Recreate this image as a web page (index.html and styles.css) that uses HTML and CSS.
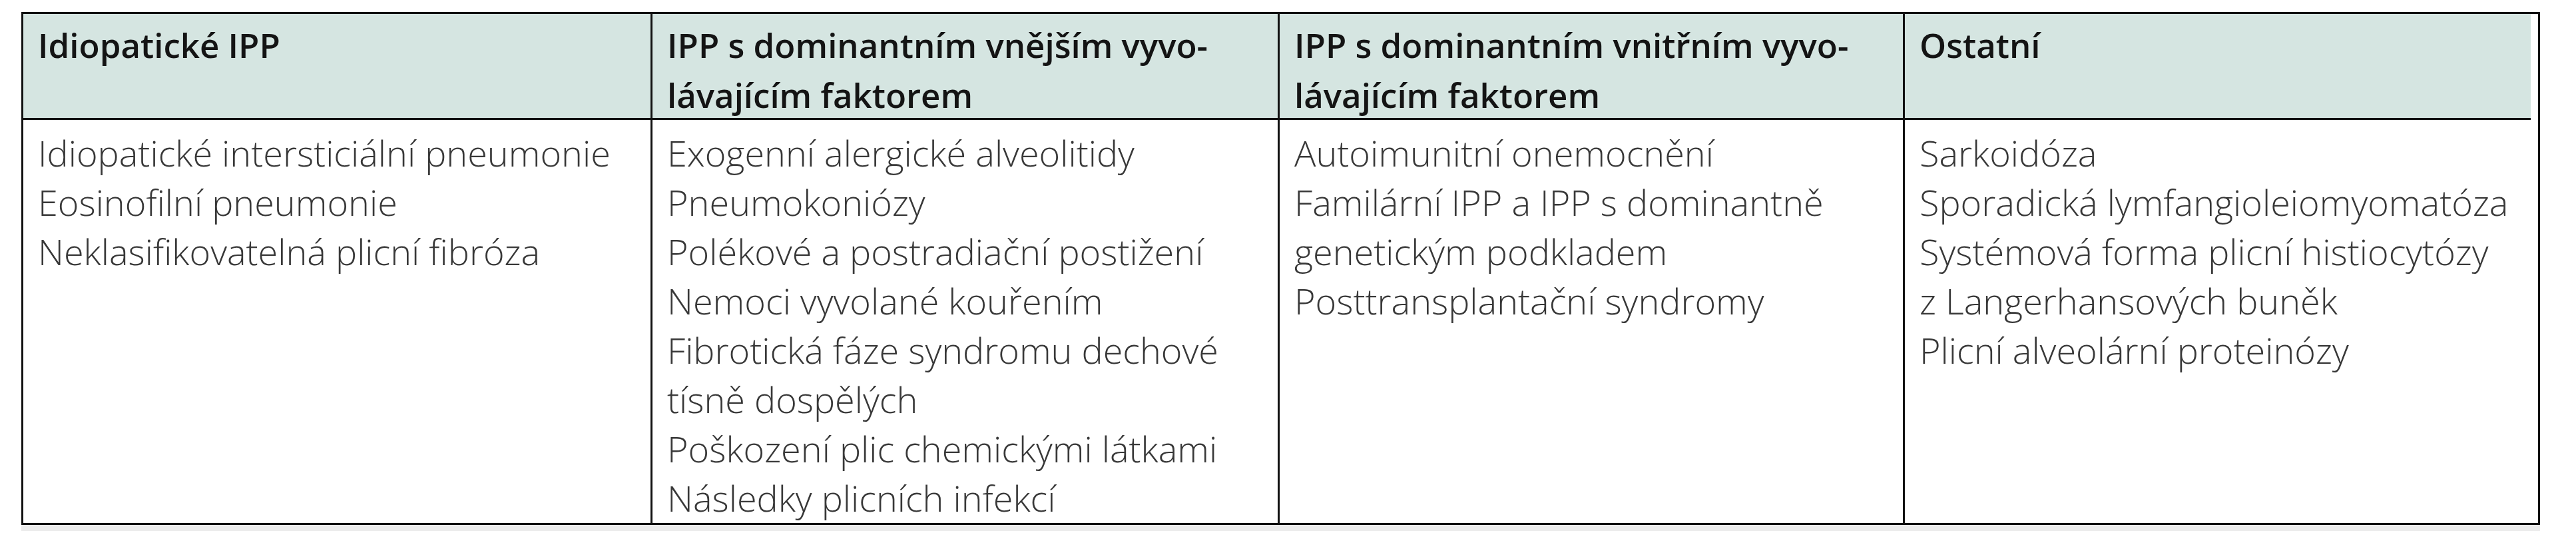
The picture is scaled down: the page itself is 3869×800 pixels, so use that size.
FILE: index.html
```html
<!DOCTYPE html>
<html lang="cs">
<head>
<meta charset="utf-8">
<title>Klasifikace IPP</title>
<link rel="stylesheet" href="styles.css">
</head>
<body>
<div class="page">
  <div class="table">
    <div class="cell head">Idiopatické IPP</div>
    <div class="cell head">IPP s dominantním vnějším vyvo-<br>lávajícím faktorem</div>
    <div class="cell head">IPP s dominantním vnitřním vyvo-<br>lávajícím faktorem</div>
    <div class="cell head">Ostatní</div>

    <div class="cell body">
      <div>Idiopatické intersticiální pneumonie</div>
      <div>Eosinofilní pneumonie</div>
      <div>Neklasifikovatelná plicní fibróza</div>
    </div>
    <div class="cell body">
      <div>Exogenní alergické alveolitidy</div>
      <div>Pneumokoniózy</div>
      <div>Polékové a postradiační postižení</div>
      <div>Nemoci vyvolané kouřením</div>
      <div>Fibrotická fáze syndromu dechové<br>tísně dospělých</div>
      <div>Poškození plic chemickými látkami</div>
      <div>Následky plicních infekcí</div>
    </div>
    <div class="cell body">
      <div>Autoimunitní onemocnění</div>
      <div>Familární IPP a IPP s dominantně<br>genetickým podkladem</div>
      <div>Posttransplantační syndromy</div>
    </div>
    <div class="cell body">
      <div>Sarkoidóza</div>
      <div>Sporadická lymfangioleiomyomatóza</div>
      <div>Systémová forma plicní histiocytózy<br>z Langerhansových buněk</div>
      <div>Plicní alveolární proteinózy</div>
    </div>
  </div>
  <div class="shadow"></div>
</div>
</body>
</html>
```

FILE: styles.css
```css
html, body {
  margin: 0;
  padding: 0;
  background: #ffffff;
}

.page {
  padding: 18px 0 0 32px;
  width: 3783px;
}

.table {
  display: grid;
  grid-template-columns: 942px 942px 939px 943px;
  grid-template-rows: 159px 605px;
  border: 3px solid #111111;
  font-family: "Open Sans", "Noto Sans", sans-serif;
  white-space: nowrap;
}

.cell {
  padding-left: 22px;
  border-left: 3px solid #111111;
}

.cell:nth-child(4n+1) {
  border-left: none;
}

.head {
  background: #d5e5e1;
  border-bottom: 3px solid #111111;
  color: #141414;
  font-weight: 600;
  font-size: 51px;
  line-height: 75px;
  padding-top: 9px;
}

.body {
  background: #ffffff;
  color: #383838;
  font-weight: 300;
  font-size: 54px;
  line-height: 74px;
  padding-top: 12px;
}

.shadow {
  height: 9px;
  background: #ececec;
}
```
